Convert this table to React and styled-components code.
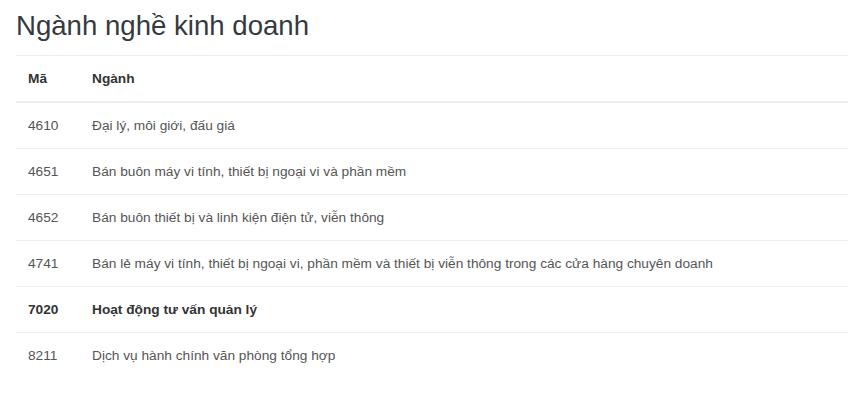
import React from 'react';
import styled, { createGlobalStyle } from 'styled-components';

const GlobalStyle = createGlobalStyle`
  body {
    margin: 0;
    background: #fff;
    font-family: "Liberation Sans", Arial, sans-serif;
    color: #555;
  }
`

const Page = styled.div`
  padding: 0 6px 0 16px;
`

const Title = styled.h2`
  margin: 0;
  padding-top: 7px;
  height: 48px;
  font-size: 27.6px;
  font-weight: 400;
  line-height: 38px;
  color: #343a40;
`

const Table = styled.table`
  width: 100%;
  border-collapse: collapse;
  font-size: 13.7px;
`

const HeadCell = styled.th`
  text-align: left;
  font-weight: 700;
  color: #333;
  padding: 12px;
  line-height: 21px;
  border-top: 1px solid #eceeef;
  border-bottom: 2px solid #eceeef;
  width: ${p => (p.narrow ? '40px' : 'auto')};
`

const Cell = styled.td`
  padding: 12px;
  line-height: 21px;
  border-top: 1px solid #eceeef;
  font-weight: ${p => (p.bold ? 700 : 400)};
  color: ${p => (p.bold ? '#333' : '#555')};
`

const rows = [
  { code: '4610', name: 'Đại lý, môi giới, đấu giá' },
  { code: '4651', name: 'Bán buôn máy vi tính, thiết bị ngoại vi và phần mềm' },
  { code: '4652', name: 'Bán buôn thiết bị và linh kiện điện tử, viễn thông' },
  { code: '4741', name: 'Bán lẻ máy vi tính, thiết bị ngoại vi, phần mềm và thiết bị viễn thông trong các cửa hàng chuyên doanh' },
  { code: '7020', name: 'Hoạt động tư vấn quản lý', main: true },
  { code: '8211', name: 'Dịch vụ hành chính văn phòng tổng hợp' },
]

const App = () => {
  return (
    <Page>
      <GlobalStyle />
      <Title>Ngành nghề kinh doanh</Title>
      <Table>
        <thead>
          <tr>
            <HeadCell narrow>Mã</HeadCell>
            <HeadCell>Ngành</HeadCell>
          </tr>
        </thead>
        <tbody>
          {rows.map(r => (
            <tr key={r.code}>
              <Cell bold={r.main}>{r.code}</Cell>
              <Cell bold={r.main}>{r.name}</Cell>
            </tr>
          ))}
        </tbody>
      </Table>
    </Page>
  )
}

export default App;
